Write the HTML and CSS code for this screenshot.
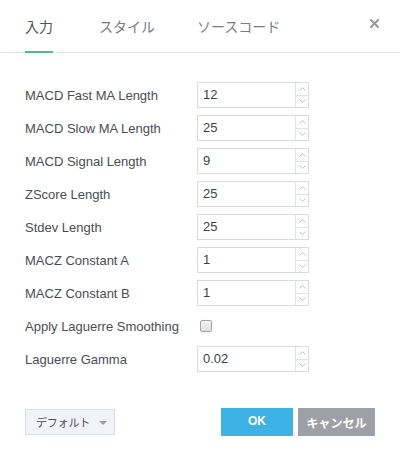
FILE: index.html
```html
<!DOCTYPE html>
<html lang="ja">
<head>
<meta charset="utf-8">
<link rel="stylesheet" href="styles.css">
</head>
<body>
<div class="dialog">
  <div class="header">
    <div class="tab active">入力</div>
    <div class="tab">スタイル</div>
    <div class="tab">ソースコード</div>
    <div class="close">
      <svg width="9" height="9" viewBox="0 0 9 9"><path d="M1 1L8 8M8 1L1 8" stroke="#9598a1" stroke-width="2" stroke-linecap="square"/></svg>
    </div>
  </div>
  <div class="form">
    <div class="row"><div class="label">MACD Fast MA Length</div><div class="input"><div class="value">12</div><div class="spin"><div class="up"><svg width="7" height="4" viewBox="0 0 7 4"><path d="M0.5 3.5L3.5 0.5L6.5 3.5" fill="none" stroke="#b4c4d4"/></svg></div><div class="down"><svg width="7" height="4" viewBox="0 0 7 4"><path d="M0.5 0.5L3.5 3.5L6.5 0.5" fill="none" stroke="#b4c4d4"/></svg></div></div></div></div>
    <div class="row"><div class="label">MACD Slow MA Length</div><div class="input"><div class="value">25</div><div class="spin"><div class="up"><svg width="7" height="4" viewBox="0 0 7 4"><path d="M0.5 3.5L3.5 0.5L6.5 3.5" fill="none" stroke="#b4c4d4"/></svg></div><div class="down"><svg width="7" height="4" viewBox="0 0 7 4"><path d="M0.5 0.5L3.5 3.5L6.5 0.5" fill="none" stroke="#b4c4d4"/></svg></div></div></div></div>
    <div class="row"><div class="label">MACD Signal Length</div><div class="input"><div class="value">9</div><div class="spin"><div class="up"><svg width="7" height="4" viewBox="0 0 7 4"><path d="M0.5 3.5L3.5 0.5L6.5 3.5" fill="none" stroke="#b4c4d4"/></svg></div><div class="down"><svg width="7" height="4" viewBox="0 0 7 4"><path d="M0.5 0.5L3.5 3.5L6.5 0.5" fill="none" stroke="#b4c4d4"/></svg></div></div></div></div>
    <div class="row"><div class="label">ZScore Length</div><div class="input"><div class="value">25</div><div class="spin"><div class="up"><svg width="7" height="4" viewBox="0 0 7 4"><path d="M0.5 3.5L3.5 0.5L6.5 3.5" fill="none" stroke="#b4c4d4"/></svg></div><div class="down"><svg width="7" height="4" viewBox="0 0 7 4"><path d="M0.5 0.5L3.5 3.5L6.5 0.5" fill="none" stroke="#b4c4d4"/></svg></div></div></div></div>
    <div class="row"><div class="label">Stdev Length</div><div class="input"><div class="value">25</div><div class="spin"><div class="up"><svg width="7" height="4" viewBox="0 0 7 4"><path d="M0.5 3.5L3.5 0.5L6.5 3.5" fill="none" stroke="#b4c4d4"/></svg></div><div class="down"><svg width="7" height="4" viewBox="0 0 7 4"><path d="M0.5 0.5L3.5 3.5L6.5 0.5" fill="none" stroke="#b4c4d4"/></svg></div></div></div></div>
    <div class="row"><div class="label">MACZ Constant A</div><div class="input"><div class="value">1</div><div class="spin"><div class="up"><svg width="7" height="4" viewBox="0 0 7 4"><path d="M0.5 3.5L3.5 0.5L6.5 3.5" fill="none" stroke="#b4c4d4"/></svg></div><div class="down"><svg width="7" height="4" viewBox="0 0 7 4"><path d="M0.5 0.5L3.5 3.5L6.5 0.5" fill="none" stroke="#b4c4d4"/></svg></div></div></div></div>
    <div class="row"><div class="label">MACZ Constant B</div><div class="input"><div class="value">1</div><div class="spin"><div class="up"><svg width="7" height="4" viewBox="0 0 7 4"><path d="M0.5 3.5L3.5 0.5L6.5 3.5" fill="none" stroke="#b4c4d4"/></svg></div><div class="down"><svg width="7" height="4" viewBox="0 0 7 4"><path d="M0.5 0.5L3.5 3.5L6.5 0.5" fill="none" stroke="#b4c4d4"/></svg></div></div></div></div>
    <div class="row"><div class="label">Apply Laguerre Smoothing</div><div class="checkbox"></div></div>
    <div class="row"><div class="label">Laguerre Gamma</div><div class="input"><div class="value">0.02</div><div class="spin"><div class="up"><svg width="7" height="4" viewBox="0 0 7 4"><path d="M0.5 3.5L3.5 0.5L6.5 3.5" fill="none" stroke="#b4c4d4"/></svg></div><div class="down"><svg width="7" height="4" viewBox="0 0 7 4"><path d="M0.5 0.5L3.5 3.5L6.5 0.5" fill="none" stroke="#b4c4d4"/></svg></div></div></div></div>
  </div>
  <div class="footer">
    <div class="defaults"><span class="defaults-text">デフォルト</span><span class="caret"></span></div>
    <div class="btn ok">OK</div>
    <div class="btn cancel">キャンセル</div>
  </div>
</div>
</body>
</html>
```
FILE: styles.css
```css
html, body {
  margin: 0;
  padding: 0;
  background: #ffffff;
}
body {
  font-family: "Liberation Sans", "Noto Sans CJK JP", sans-serif;
  color: #4a4d54;
}
.dialog {
  width: 400px;
  height: 467px;
  overflow: hidden;
}
.header {
  display: flex;
  align-items: flex-start;
  height: 52px;
  border-bottom: 1px solid #e0e3eb;
  padding: 0 21px 0 25px;
}
.tab {
  box-sizing: border-box;
  height: 53px;
  padding-top: 16px;
  font-family: "Noto Sans CJK JP", sans-serif;
  font-size: 14px;
  line-height: 20px;
  color: #787b86;
  margin-right: 42px;
  margin-bottom: -1px;
}
.tab.active {
  color: #4c525e;
  border-bottom: 2px solid #53b987;
  margin-right: 46px;
}
.close {
  margin-left: auto;
  margin-top: 19px;
  width: 9px;
  height: 9px;
}
.close svg {
  display: block;
}
.form {
  padding: 29px 25px 0 25px;
}
.row {
  display: flex;
  align-items: center;
  height: 26px;
  margin-bottom: 7px;
}
.label {
  width: 172px;
  font-size: 13px;
  color: #4a4d54;
  white-space: nowrap;
}
.input {
  box-sizing: border-box;
  width: 112px;
  height: 26px;
  border: 1px solid #d8dbe0;
  display: flex;
}
.value {
  flex: 1;
  padding-left: 5px;
  font-size: 13px;
  line-height: 24px;
  color: #3c3f45;
}
.spin {
  width: 12px;
  border-left: 1px solid #e0e3eb;
  display: flex;
  flex-direction: column;
}
.up, .down {
  flex: 1;
  display: flex;
  align-items: center;
  justify-content: center;
}
.down {
  border-top: 1px solid #e0e3eb;
}
.up svg, .down svg {
  display: block;
}
.checkbox {
  box-sizing: border-box;
  width: 12px;
  height: 12px;
  margin-left: 3px;
  border: 1px solid #a3a6ab;
  border-radius: 2px;
  background: linear-gradient(#f3f3f3, #e1e1e1);
  box-shadow: 0 0 1px rgba(0,0,0,0.15);
}
.footer {
  display: flex;
  align-items: flex-start;
  padding: 0 25px;
  margin-top: 36px;
}
.defaults {
  box-sizing: border-box;
  width: 90px;
  height: 26px;
  margin-top: 1px;
  border: 1px solid #dcdfe5;
  background: #f0f3fa;
  padding-left: 10px;
  display: flex;
  align-items: center;
  white-space: nowrap;
}
.defaults-text {
  font-family: "Noto Sans CJK JP", sans-serif;
  font-size: 11px;
  letter-spacing: -0.2px;
  line-height: 24px;
  color: #4a4d54;
}
.caret {
  width: 0;
  height: 0;
  margin-left: 9px;
  margin-top: 1px;
  border-left: 4px solid transparent;
  border-right: 4px solid transparent;
  border-top: 4px solid #9a9ca2;
}
.btn {
  box-sizing: border-box;
  height: 28px;
  color: #ffffff;
  font-weight: bold;
  font-size: 12px;
  text-align: center;
}
.ok {
  margin-left: auto;
  width: 72px;
  background: #3cb3e4;
  line-height: 26px;
}
.cancel {
  margin-left: 5px;
  width: 77px;
  background: #9ea0a7;
  font-family: "Noto Sans CJK JP", sans-serif;
  font-size: 12px;
  line-height: 30px;
}
```
